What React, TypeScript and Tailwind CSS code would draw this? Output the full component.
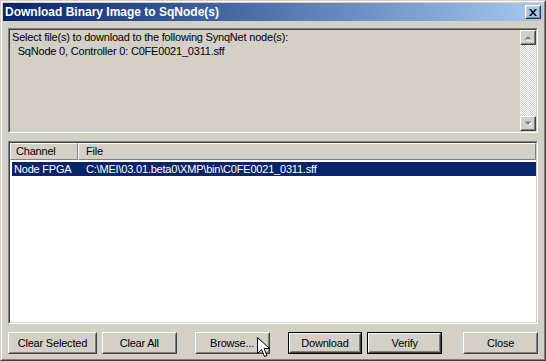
import type { ReactNode } from 'react'

const raisedOuter = 'border border-t-white border-l-white border-b-[#404040] border-r-[#404040]'
const raisedInner = 'border border-t-[#d4d0c8] border-l-[#d4d0c8] border-b-[#808080] border-r-[#808080]'

function Raised({ className = '', children }: { className?: string; children?: ReactNode }) {
  return (
    <div className={`${raisedOuter} ${className}`}>
      <div className={`${raisedInner} flex h-full w-full items-center justify-center`}>{children}</div>
    </div>
  )
}

function Sunken({ className = '', innerClass = '', children }: { className?: string; innerClass?: string; children?: ReactNode }) {
  return (
    <div className={`border border-t-[#808080] border-l-[#808080] border-b-white border-r-white ${className}`}>
      <div className={`h-full w-full border border-t-[#404040] border-l-[#404040] border-b-[#d4d0c8] border-r-[#d4d0c8] ${innerClass}`}>
        {children}
      </div>
    </div>
  )
}

function Arrow({ up }: { up: boolean }) {
  const pts = up ? '0,4 7,4 3.5,0.5' : '0,0 7,0 3.5,3.5'
  return (
    <svg width="9" height="6" viewBox="0 0 9 6">
      <polygon points={pts} transform="translate(1.5,1.5)" fill="#ffffff" />
      <polygon points={pts} transform="translate(0.5,0.5)" fill="#808080" />
    </svg>
  )
}

function Button({ label, width, isDefault, className = '' }: { label: string; width: string; isDefault?: boolean; className?: string }) {
  if (isDefault) {
    return (
      <div className={`h-[22px] border border-black ${width} ${className}`}>
        <Raised className="h-full w-full">{label}</Raised>
      </div>
    )
  }
  return (
    <Raised className={`h-[22px] ${width} ${className}`}>{label}</Raised>
  )
}

export default function App() {
  return (
    <div className="relative h-[361px] w-[546px] border border-t-[#d4d0c8] border-l-[#d4d0c8] border-b-[#404040] border-r-[#404040] bg-[#d4d0c8] font-['Liberation_Sans',Arial,sans-serif] text-[11px] tracking-[-0.2px] text-black">
      <div className="flex h-full w-full flex-col border border-t-white border-l-white border-b-[#808080] border-r-[#808080] p-px">
        {/* title bar */}
        <div className="flex h-[18px] items-center justify-between bg-gradient-to-r from-[#0a246a] to-[#a6caf0] pl-[2px] pr-[2px]">
          <span className="text-[12px] font-bold tracking-normal text-white">Download Binary Image to SqNode(s)</span>
          <Raised className="h-[14px] w-[16px]">
            <svg width="8" height="7" viewBox="0 0 8 7">
              <path d="M0 0h2l2 2.5 2-2.5h2l-3 3.5 3 3.5h-2l-2-2.5-2 2.5h-2l3-3.5z" fill="#000" />
            </svg>
          </Raised>
        </div>

        <div className="flex flex-col px-[5px]">
          {/* message box */}
          <Sunken className="mt-[7px] h-[105px]" innerClass="flex">
            <div className="flex-1 pl-[2px] leading-[14px]">
              <p>Select file(s) to download to the following SynqNet node(s):</p>
              <p className="whitespace-pre">  SqNode 0, Controller 0: C0FE0021_0311.sff</p>
            </div>
            <div className="flex w-[16px] flex-col">
              <Raised className="h-[15px] w-[16px]">
                <Arrow up />
              </Raised>
              <div className="flex-1 bg-[repeating-conic-gradient(#ffffff_0_25%,#d4d0c8_0_50%)] bg-size-[2px_2px]" />
              <Raised className="h-[15px] w-[16px]">
                <Arrow up={false} />
              </Raised>
            </div>
          </Sunken>

          {/* list view */}
          <Sunken className="mt-[8px] h-[183px]" innerClass="bg-white">
            <div className="flex h-[17px]">
              <div className="flex w-[68px] items-center border border-t-white border-l-white border-b-[#808080] border-r-[#808080] bg-[#d4d0c8] pl-[5px]">
                Channel
              </div>
              <div className="flex flex-1 items-center border border-t-white border-l-white border-b-[#808080] border-r-[#808080] bg-[#d4d0c8] pl-[7px]">
                File
              </div>
            </div>
            <div className="ml-[2px] mt-[2px] flex h-[14px] items-center bg-[#0a246a] text-white">
              <span className="w-[74px] pl-[2px]">Node FPGA</span>
              <span>C:\MEI\03.01.beta0\XMP\bin\C0FE0021_0311.sff</span>
            </div>
          </Sunken>

          {/* buttons */}
          <div className="mt-[8px] flex">
            <Button label="Clear Selected" width="w-[89px]" />
            <Button label="Clear All" width="w-[75px]" className="ml-[5px]" />
            <Button label="Browse..." width="w-[75px]" className="ml-[18px]" />
            <Button label="Download" width="w-[75px]" className="ml-[18px]" isDefault />
            <Button label="Verify" width="w-[75px]" className="ml-[5px]" isDefault />
            <Button label="Close" width="w-[75px]" className="ml-[21px]" />
          </div>
        </div>
      </div>

      {/* mouse pointer over Browse */}
      <svg className="absolute left-[256px] top-[336px]" width="13" height="21" viewBox="0 0 13 21">
        <path d="M0.5 0.5v16l4-4 3 7 2.5-1-3-7h5.5z" fill="#fff" stroke="#000" strokeWidth="1" />
      </svg>
    </div>
  )
}
